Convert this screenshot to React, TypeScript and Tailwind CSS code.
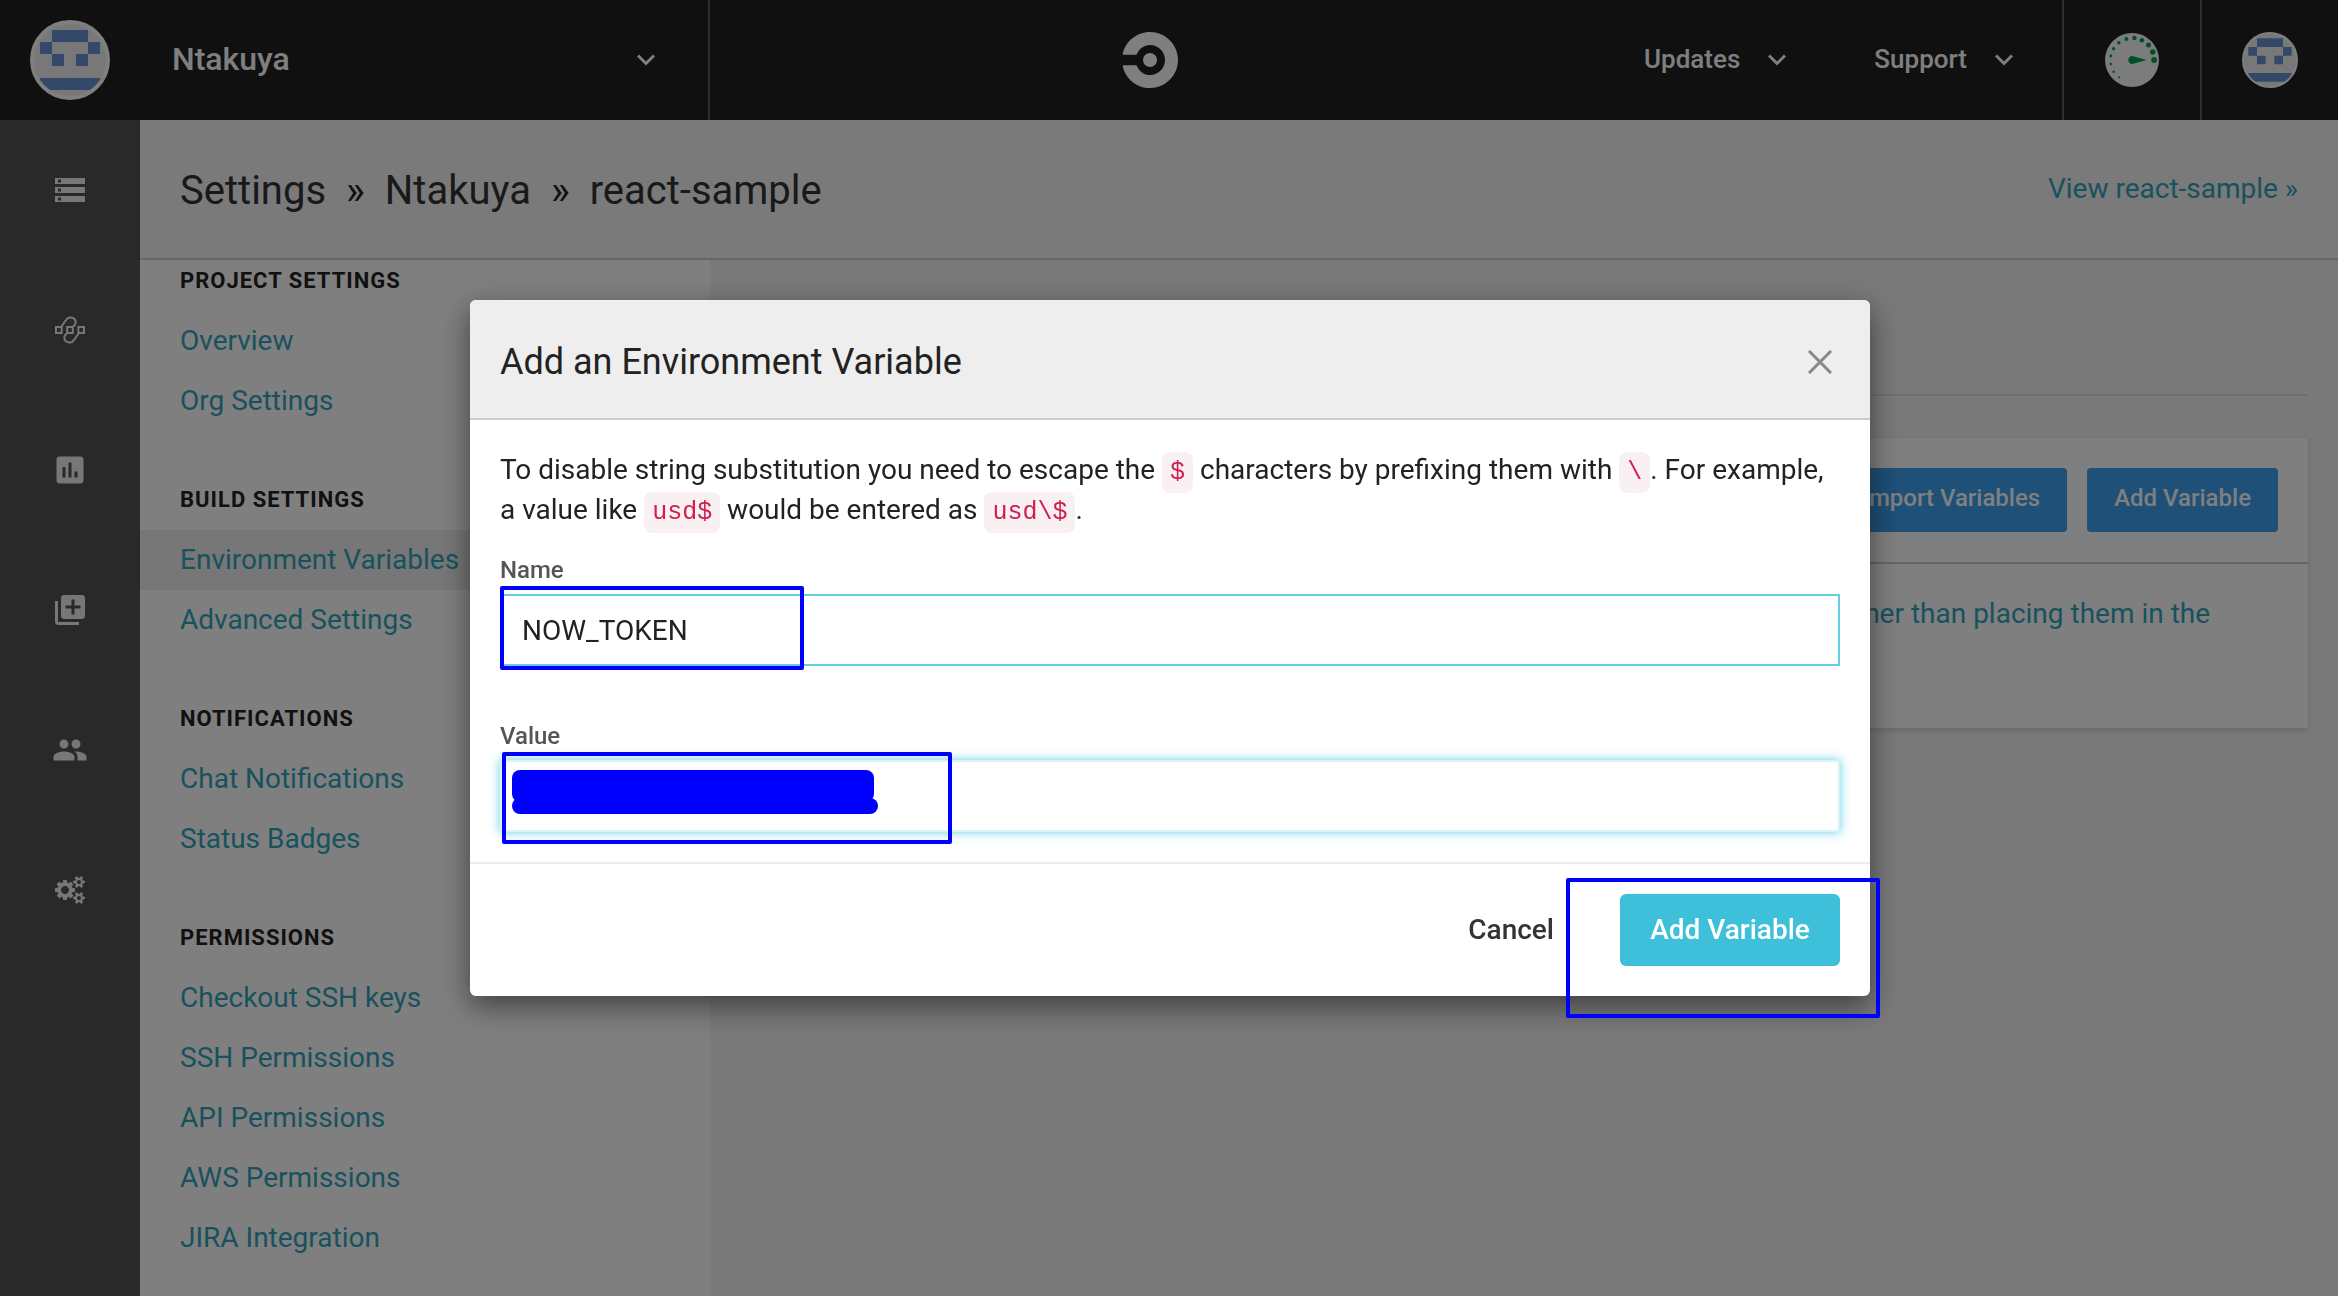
import React from "react";
import { MdStorage, MdAssessment, MdLibraryAdd, MdPeople } from "react-icons/md";

const navGroups = [
  { title: "PROJECT SETTINGS", links: ["Overview", "Org Settings"] },
  { title: "BUILD SETTINGS", links: ["Environment Variables", "Advanced Settings"] },
  { title: "NOTIFICATIONS", links: ["Chat Notifications", "Status Badges"] },
  {
    title: "PERMISSIONS",
    links: ["Checkout SSH keys", "SSH Permissions", "API Permissions", "AWS Permissions", "JIRA Integration"],
  },
];

function Chevron() {
  return (
    <svg className="h-3 w-[18px]" viewBox="0 0 18 12" fill="none" stroke="currentColor" strokeWidth="3">
      <path d="M1 1.5 9 9.5 17 1.5" />
    </svg>
  );
}

/* 5x5 identicon inside a round white frame */
function Identicon({ className }: { className: string }) {
  return (
    <svg className={`rounded-full bg-[#f0f0f0] ${className}`} viewBox="0 0 72 72" fill="#6892d2">
      <path d="M18 6h36v12H18zM6 18h12v12H6zM54 18h12v12H54zM18 30h12v12H18zM42 30h12v12H42zM6 54h60v12H6z" />
    </svg>
  );
}

function Logo() {
  return (
    <svg className="h-14 w-14" viewBox="0 0 56 56" fill="#fff">
      <circle cx="28" cy="28" r="7" />
      <path d="M.7 22.1C3.4 9.4 14.6 0 28 0c15.500 0 28 12.500 28 28S43.500 56 28 56C14.600 56 3.400 46.600.7 33.900c-.1-.4.1-.6.5-.6H14c.4 0 .7.2.9.6C17.200 39.300 22.200 43 28 43c8.300 0 15-6.700 15-15s-6.700-15-15-15c-5.800 0-10.800 3.700-13.100 9.100-.2.4-.5.6-.9.6H1.200c-.4 0-.6-.2-.5-.6z" />
    </svg>
  );
}

const gaugeDots = [
  [22.1, 0, 2.9], [20.7, -8, 2.7], [16.500, -15, 2.5], [9.9, -19.7, 2.3],
  [2.400, -22, 2.2], [-5.600, -21, 2], [-13.200, -17.3, 1.8], [-18.400, -11.3, 1.600],
  [-21.200, -4, 1.4], [-21.200, 4, 1.3], [-18.400, 11.7, 1.2], [-12.700, 17.3, 1],
];

function Gauge() {
  return (
    <svg className="h-[54px] w-[54px]" viewBox="-27 -27 54 54">
      <circle r="27" fill="#f8f8f8" />
      <g fill="#00a04c">
        {gaugeDots.map(([x, y, r]) => (
          <circle key={`${x},${y}`} cx={x} cy={y} r={r} />
        ))}
        <path d="M14.500 0 2 -3.600A4 4 0 1 0 2 3.600Z" />
      </g>
    </svg>
  );
}

function Workflows() {
  return (
    <svg className="h-7 w-[30px]" viewBox="0 0 30 28" fill="none" stroke="currentColor" strokeWidth="2">
      <path d="M6.500 10.500 11 4C13.500-.2 21.500 1 20.500 7.500c-.3 1.600-1.500 2.500-3 3.300" />
      <path d="M23.500 17.500 19 24C16.500 28.200 8.500 27 9.500 20.500c.3-1.600 1.500-2.500 3-3.300" />
      <path d="M1 11h5.600v6H1zM12.200 11h5.600v6h-5.600zM23.400 11H29v6h-5.600z" />
    </svg>
  );
}

function Cogs() {
  return (
    <svg className="h-7 w-[30px]" viewBox="0 0 1920 1792" fill="currentColor">
      <path d="M896 896q0-106-75-181t-181-75-181 75-75 181 75 181 181 75 181-75 75-181zm768 512q0-52-38-90t-90-38-90 38-38 90q0 53 37.500 90.500t90.500 37.500 90.500-37.500 37.500-90.500zm0-1024q0-52-38-90t-90-38-90 38-38 90q0 53 37.500 90.500t90.500 37.500 90.500-37.500 37.500-90.500zm-384 421v185q0 10-7 19.500t-16 10.500l-155 24q-11 35-32 76 34 48 90 115 7 11 7 20 0 12-7 19-23 30-82.500 89.500t-78.500 59.500q-11 0-21-7l-115-90q-37 19-77 31-11 108-23 155-7 24-30 24h-186q-11 0-20-7.500t-10-17.500l-23-153q-34-10-75-31l-118 89q-7 7-20 7-11 0-21-8-144-133-144-160 0-9 7-19 10-14 41-53t47-61q-23-44-35-82l-152-24q-10-1-17-9.500t-7-19.500v-185q0-10 7-19.500t16-10.500l155-24q11-35 32-76-34-48-90-115-7-11-7-20 0-12 7-20 22-30 82-89t79-59q11 0 21 7l115 90q34-18 77-32 11-108 23-154 7-24 30-24h186q11 0 20 7.500t10 17.500l23 153q34 10 75 31l118-89q8-7 20-7 11 0 21 8 144 133 144 160 0 8-7 19-12 16-42 54t-45 60q23 48 34 82l152 23q10 2 17 10.500t7 19.500zm640 533v140q0 16-149 31-12 27-30 52 51 113 51 138 0 4-4 7-122 71-124 71-8 0-46-47t-52-68q-20 2-30 2t-30-2q-14 21-52 68t-46 47q-2 0-124-71-4-3-4-7 0-25 51-138-18-25-30-52-149-15-149-31v-140q0-16 149-31 13-29 30-52-51-113-51-138 0-4 4-7 4-2 35-20t59-34 30-16q8 0 46 46.500t52 67.500q20-2 30-2t30 2q51-71 92-112l6-2q4 0 124 70 4 3 4 7 0 25-51 138 17 23 30 52 149 15 149 31zm0-1024v140q0 16-149 31-12 27-30 52 51 113 51 138 0 4-4 7-122 71-124 71-8 0-46-47t-52-68q-20 2-30 2t-30-2q-14 21-52 68t-46 47q-2 0-124-71-4-3-4-7 0-25 51-138-18-25-30-52-149-15-149-31v-140q0-16 149-31 13-29 30-52-51-113-51-138 0-4 4-7 4-2 35-20t59-34 30-16q8 0 46 46.500t52 67.500q20-2 30-2t30 2q51-71 92-112l6-2q4 0 124 70 4 3 4 7 0 25-51 138 17 23 30 52 149 15 149 31z" />
    </svg>
  );
}

const railItems = [
  { label: "Builds", icon: <MdStorage size={36} /> },
  { label: "Workflows", icon: <Workflows /> },
  { label: "Insights", icon: <MdAssessment size={36} /> },
  { label: "Add Projects", icon: <MdLibraryAdd size={36} /> },
  { label: "Team", icon: <MdPeople size={36} /> },
  { label: "Settings", icon: <Cogs /> },
];

function TopBar() {
  return (
    <header className="flex h-[120px] shrink-0 items-stretch bg-[#202020] text-white">
      <button type="button" className="flex w-[710px] shrink-0 items-center border-r-2 border-[#5c5c5c] pr-[53px] pl-[30px]">
        <Identicon className="h-20 w-20 border-4 border-white" />
        <span className="ml-[62px] pb-0.5 text-[32px] font-medium">Ntakuya</span>
        <span className="ml-auto">
          <Chevron />
        </span>
      </button>
      <div className="flex grow items-center justify-center">
        <a href="#home" aria-label="Home">
          <Logo />
        </a>
      </div>
      <div className="flex items-center gap-[88px] pr-[49px] pl-[55px] text-[26px] font-medium">
        <button type="button" className="flex items-center gap-7">
          <span className="pb-0.5">Updates</span> <Chevron />
        </button>
        <button type="button" className="flex items-center gap-7">
          <span className="pb-0.5">Support</span> <Chevron />
        </button>
      </div>
      <a href="#status" aria-label="Status" className="flex w-[138px] items-center justify-center border-l-2 border-[#5c5c5c]">
        <Gauge />
      </a>
      <a href="#account" aria-label="Account" className="flex w-[138px] items-center justify-center border-l-2 border-[#5c5c5c]">
        <Identicon className="h-14 w-14 border-2 border-white" />
      </a>
    </header>
  );
}

function Code({ children }: { children: React.ReactNode }) {
  return (
    <code className="rounded-lg bg-[#f9f0f3] px-2 py-[6px] font-['Liberation_Mono',monospace] text-[25px] leading-none text-[#d0214e]">
      {children}
    </code>
  );
}

function Dialog() {
  return (
    <section
      role="dialog"
      aria-modal="true"
      aria-labelledby="dialog-title"
      className="relative w-full max-w-[1400px] rounded-md bg-white shadow-[0_10px_30px_rgba(0,0,0,0.5)]"
    >
      <header className="flex h-[120px] items-center justify-between rounded-t-md border-b-2 border-[#ccc] bg-[#eee] px-[30px] pt-1.5">
        <h2 id="dialog-title" className="text-[36px] leading-10">
          Add an Environment Variable
        </h2>
        <button type="button" aria-label="Close" className="mr-2 text-[#888]">
          <svg className="h-6 w-6" viewBox="0 0 24 24" fill="none" stroke="currentColor" strokeWidth="3">
            <path d="M1 1 23 23M23 1 1 23" />
          </svg>
        </button>
      </header>
      <div className="p-[30px]">
        <p className="mb-[26px] text-[28px] leading-10">
          To disable string substitution you need to escape the <Code>$</Code> characters by prefixing them with{" "}
          <Code>\</Code>. For example, a value like <Code>usd$</Code> would be entered as <Code>usd\$</Code>.
        </p>
        <div className="flex flex-col gap-14">
          <div className="relative flex flex-col gap-2.5">
            <label htmlFor="name" className="text-2xl leading-7 font-medium text-[#555]">
              Name
            </label>
            <input
              id="name"
              defaultValue="NOW_TOKEN"
              className="h-[72px] w-full border-2 border-[#62d0e2] bg-white px-5 text-[28px] outline-none"
            />
            <div className="pointer-events-none absolute top-[30px] left-0 h-[84px] w-[304px] rounded-xs border-4 border-[#00f]" />
          </div>
          <div className="relative flex flex-col gap-2.5">
            <label htmlFor="value" className="text-2xl leading-7 font-medium text-[#555]">
              Value
            </label>
            <input
              id="value"
              defaultValue=""
              className="h-[72px] w-full border-2 border-[#d8f2f7] bg-white px-5 text-[28px] shadow-[0_0_10px_#62d0e2] outline-none"
            />
            <div className="pointer-events-none absolute top-[30px] left-0.5 h-[92px] w-[450px] rounded-xs border-4 border-[#00f] px-1.5 py-3.5">
              <div className="h-8 w-[362px] rounded-lg bg-[#00f]" />
              <div className="-mt-1 h-4 w-[366px] rounded-lg bg-[#00f]" />
            </div>
          </div>
        </div>
      </div>
      <footer className="flex items-center justify-end gap-[66px] border-t-2 border-[#ececec] p-[30px] text-[28px] font-medium">
        <button type="button" className="text-[#333]">
          Cancel
        </button>
        <button type="submit" className="h-[72px] w-[220px] rounded-md bg-[#3ec0da] text-white">
          Add Variable
        </button>
      </footer>
      <div className="pointer-events-none absolute -right-2.5 -bottom-[22px] h-[140px] w-[314px] rounded-xs border-4 border-[#00f]" />
    </section>
  );
}

export default function App() {
  return (
    <div className="flex min-h-screen flex-col bg-[#f3f3f3] font-['Roboto',sans-serif] text-[#222]">
      <TopBar />
      <div className="flex grow">
        <nav aria-label="Main" className="flex w-[140px] shrink-0 flex-col bg-[#535353] text-[#eee]">
          {railItems.map((item) => (
            <a key={item.label} href="#nav" aria-label={item.label} className="flex h-[140px] items-center justify-center">
              {item.icon}
            </a>
          ))}
        </nav>
        <div className="flex min-w-0 grow flex-col">
          <div className="flex h-[140px] items-center justify-between border-b-2 border-[#ccc] bg-[#f4f4f4] px-10">
            <h1 className="flex items-center gap-5 pt-1 text-[40px] text-[#333]">
              <a href="#settings">Settings</a>
              <span className="text-[#222]">»</span>
              <a href="#org">Ntakuya</a>
              <span className="text-[#222]">»</span>
              <a href="#project">react-sample</a>
            </h1>
            <a href="#view" className="text-[28px] text-[#30a4bd]">
              View react-sample »
            </a>
          </div>
          <div className="flex grow">
            <nav aria-label="Settings" className="flex w-[570px] shrink-0 flex-col gap-[57px] bg-white pt-[9px]">
              {navGroups.map((group) => (
                <div key={group.title}>
                  <h2 className="mb-[18px] px-10 text-[22px] leading-6 font-bold tracking-[1px]">{group.title}</h2>
                  {group.links.map((link) => (
                    <a
                      key={link}
                      href="#link"
                      className={`block px-10 text-[28px] leading-[60px] text-[#30a4bd] ${
                        link === "Environment Variables" ? "bg-[#eee]" : ""
                      }`}
                    >
                      {link}
                    </a>
                  ))}
                </div>
              ))}
            </nav>
            <main className="min-w-0 grow px-[30px]">
              <h2 className="mb-[42px] flex h-[136px] items-center border-b-2 border-[#dedede] text-[32px]">
                Environment Variables
              </h2>
              <div className="bg-white shadow-[0_2px_6px_rgba(0,0,0,0.15)]">
                <div className="flex justify-end gap-5 border-b-2 border-[#ccc] p-[30px] text-2xl font-medium text-white">
                  <button type="button" className="h-16 rounded bg-[#3ca0f0] px-[27px] pb-1">
                    Import Variables
                  </button>
                  <button type="button" className="h-16 rounded bg-[#3ca0f0] px-[27px] pb-1">
                    Add Variable
                  </button>
                </div>
                <div className="h-[164px] p-[30px] text-[28px] leading-10 text-[#30a4bd]">
                  Add environment variables to the job. You can add sensitive data (e.g. API keys) here, rather than
                  placing them in the repository.
                </div>
              </div>
            </main>
          </div>
        </div>
      </div>
      <div className="fixed inset-0 flex items-start justify-center bg-black/50 pt-[300px] pl-0.5">
        <Dialog />
      </div>
    </div>
  );
}
